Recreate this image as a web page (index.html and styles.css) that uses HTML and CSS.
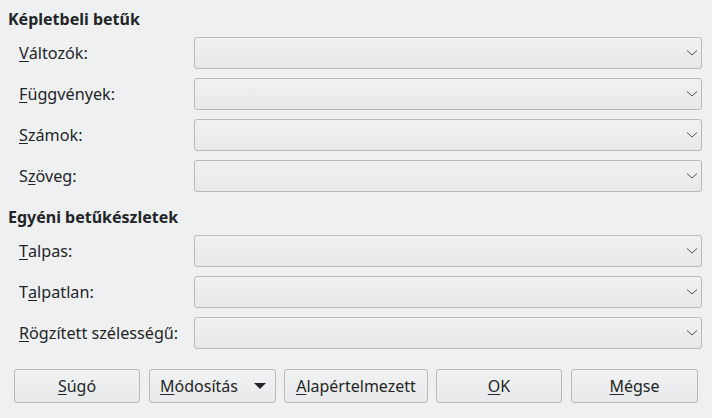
FILE: index.html
```html
<!DOCTYPE html>
<html lang="hu">
<head>
  <meta charset="UTF-8" />
  <title>Betűkészletek</title>
  <link rel="stylesheet" href="styles.css">
</head>
<body>
  <div class="dialog">
    <h3 class="heading first">Képletbeli betűk</h3>
    <div class="rows">
      <label class="label"><u>V</u>áltozók:</label>
      <div class="combo"><svg class="chevron" viewBox="0 0 12 7"><polyline points="1,1.5 6,6 11,1.5"/></svg></div>
      <label class="label"><u>F</u>üggvények:</label>
      <div class="combo"><svg class="chevron" viewBox="0 0 12 7"><polyline points="1,1.5 6,6 11,1.5"/></svg></div>
      <label class="label"><u>S</u>zámok:</label>
      <div class="combo"><svg class="chevron" viewBox="0 0 12 7"><polyline points="1,1.5 6,6 11,1.5"/></svg></div>
      <label class="label">S<u>z</u>öveg:</label>
      <div class="combo"><svg class="chevron" viewBox="0 0 12 7"><polyline points="1,1.5 6,6 11,1.5"/></svg></div>
    </div>

    <h3 class="heading">Egyéni betűkészletek</h3>
    <div class="rows">
      <label class="label"><u>T</u>alpas:</label>
      <div class="combo"><svg class="chevron" viewBox="0 0 12 7"><polyline points="1,1.5 6,6 11,1.5"/></svg></div>
      <label class="label">T<u>a</u>lpatlan:</label>
      <div class="combo"><svg class="chevron" viewBox="0 0 12 7"><polyline points="1,1.5 6,6 11,1.5"/></svg></div>
      <label class="label"><u>R</u>ögzített szélességű:</label>
      <div class="combo"><svg class="chevron" viewBox="0 0 12 7"><polyline points="1,1.5 6,6 11,1.5"/></svg></div>
    </div>

    <div class="buttons">
      <button class="btn help"><u>S</u>úgó</button>
      <button class="btn menu"><span><u>M</u>ódosítás</span><span class="arrow"></span></button>
      <button class="btn defaults"><u>A</u>lapértelmezett</button>
      <button class="btn ok"><u>O</u>K</button>
      <button class="btn cancel"><u>M</u>égse</button>
    </div>
  </div>
</body>
</html>
```

FILE: styles.css
```css
* {
  box-sizing: border-box;
}
body {
  margin: 0;
  background: #eff0f1;
  color: #232629;
  font-family: 'Noto Sans', sans-serif;
  font-size: 16px;
}
.dialog {
  width: 712px;
  height: 418px;
  padding: 0 10px 0 8px;
}
.heading {
  margin: 15px 0 8px;
  height: 20px;
  line-height: 20px;
  font-size: 16px;
  font-weight: 700;
}
.heading.first {
  margin-top: 9px;
}
.rows {
  display: grid;
  grid-template-columns: 186px 1fr;
  grid-auto-rows: 32px;
  row-gap: 9px;
}
.label {
  padding: 0 0 1px 11px;
  display: flex;
  align-items: center;
  font-size: 16.2px;
}
u {
  text-decoration-thickness: 1px;
  text-underline-offset: 2px;
}
.combo {
  position: relative;
  border: 1px solid #b9babb;
  border-radius: 3px;
  background: linear-gradient(#f0f1f2, #e7e8e9);
}
.chevron {
  position: absolute;
  right: 3px;
  top: 11px;
  width: 12px;
  height: 7px;
  fill: none;
  stroke: #505356;
  stroke-width: 1;
}
.buttons {
  display: flex;
  margin-top: 20px;
  padding-left: 6px;
}
.btn {
  height: 34px;
  border: 1px solid #b9babb;
  border-radius: 3px;
  background: linear-gradient(#f1f2f3, #e8e9ea);
  color: #232629;
  font-family: 'Noto Sans', sans-serif;
  font-size: 16px;
  padding: 0;
}
.help { width: 126px; }
.menu { width: 127px; margin-left: 9px; }
.defaults { width: 144px; margin-left: 8px; }
.ok { width: 126px; margin-left: 8px; }
.cancel { width: 127px; margin-left: 9px; }
.menu {
  display: flex;
  align-items: center;
  justify-content: space-between;
  padding: 0 9px 0 10px;
}
.arrow {
  width: 0;
  height: 0;
  border-left: 6px solid transparent;
  border-right: 6px solid transparent;
  border-top: 6px solid #232629;
}
```
